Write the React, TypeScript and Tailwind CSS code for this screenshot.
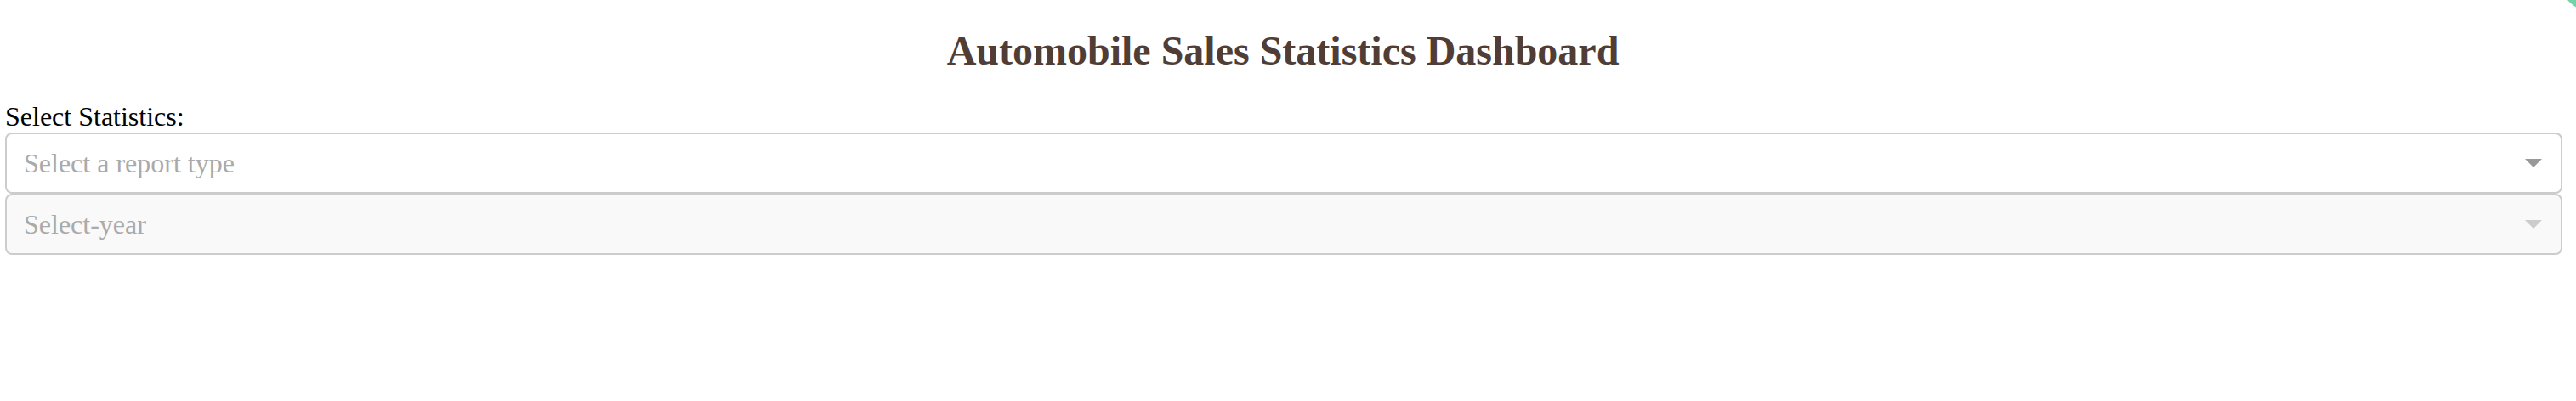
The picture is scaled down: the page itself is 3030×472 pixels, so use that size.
const Dropdown = ({ placeholder, disabled }: { placeholder: string; disabled?: boolean }) => {
  return (
    <div
      className={
        "flex h-[72px] items-center justify-between rounded-[8px] border-2 border-[#cccccc] pl-[20px] pr-[22px] " +
        (disabled ? "bg-[#f9f9f9]" : "bg-white")
      }
    >
      <span className="text-[32px] text-[#aaaaaa]">{placeholder}</span>
      <span
        className={
          "h-0 w-0 border-x-[10px] border-t-[10px] border-x-transparent " +
          (disabled ? "border-t-[#cccccc]" : "border-t-[#999999]")
        }
      />
    </div>
  )
}

export default function App() {
  return (
    <div className="relative min-h-[472px] w-full overflow-hidden bg-white font-['Liberation_Serif',serif] text-black">
      <div className="absolute right-[-59px] top-[-64px] h-[78px] w-[78px] rounded-full bg-[#74d3a6]" />
      <h1 className="my-[32px] pr-[12px] text-center text-[48px] font-bold leading-[1.149] text-[#503D36]">
        Automobile Sales Statistics Dashboard
      </h1>
      <div className="ml-[6px] mr-[16px]">
        <div className="h-[37px] text-[32px] leading-[1.149]">Select Statistics:</div>
        <Dropdown placeholder="Select a report type" />
        <Dropdown placeholder="Select-year" disabled />
      </div>
    </div>
  )
}
